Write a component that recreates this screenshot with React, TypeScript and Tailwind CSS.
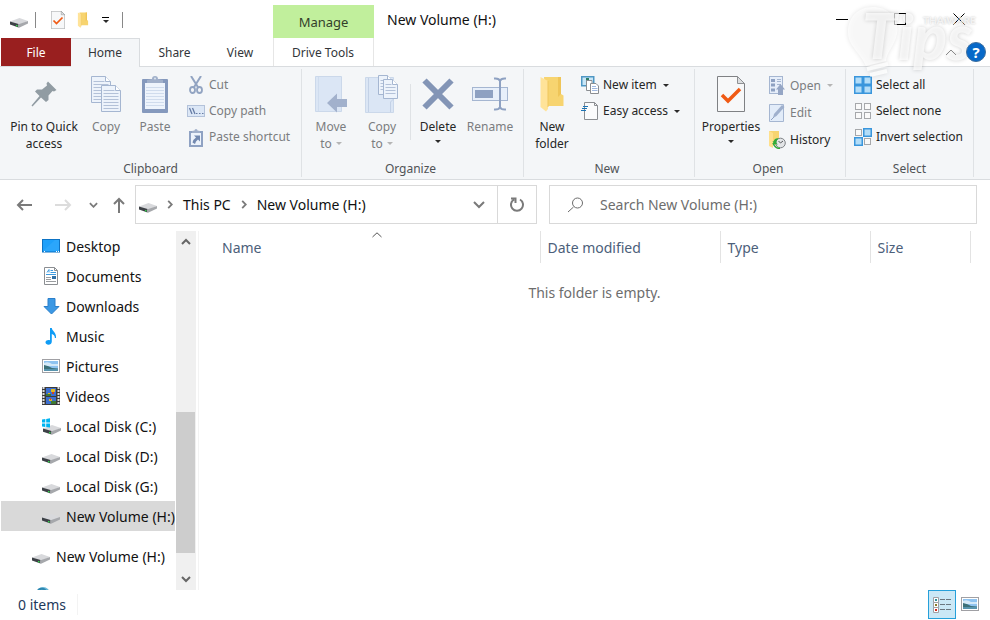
import type { ReactNode } from 'react';

type IconProps = { className?: string };

function DriveIcon({ className = 'w-[18px] h-[18px]' }: IconProps) {
  return (
    <svg viewBox="0 0 18 18" className={className} aria-hidden="true">
      <path d="M0 10.500 L9.500 7 L18 10 L8.500 14 Z" fill="#d8d9dc" />
      <path d="M0 10.500 L8.500 13 V16.500 L0 13.500 Z" fill="#3d4146" />
      <path d="M8.500 13.300 L18 10 V12.500 L8.500 17 Z" fill="#a6a8ac" />
      <rect x="6" y="14" width="1.500" height="1.500" fill="#35d04b" />
    </svg>
  );
}

function SystemDriveIcon() {
  return (
    <svg viewBox="0 0 20 18" className="h-[18px] w-5" aria-hidden="true">
      <path d="M2 11.500 L11 8 L20 11 L10.500 15 Z" fill="#d8d9dc" />
      <path d="M2 11.500 L10.500 14 V17.500 L2 14.800 Z" fill="#3d4146" />
      <path d="M10.500 14.300 L20 11 V13.500 L10.500 18 Z" fill="#a6a8ac" />
      <rect x="8" y="15" width="1.500" height="1.500" fill="#35d04b" />
      <path d="M1 2.500 L4.300 2 V5.500 H1Z M5.200 1.900 L9 1.300 V5.500 H5.200Z M1 6.400 H4.300 V9.900 L1 9.400Z M5.200 6.400 H9 V10.600 L5.200 10Z" fill="#00b4f1" />
    </svg>
  );
}

function CheckDocIcon({ className }: IconProps) {
  return (
    <svg viewBox="0 0 28 36" className={className} aria-hidden="true">
      <path d="M.5.500 H20.500 L27.500 7.500 V35.500 H.5Z" fill="#f7f8f9" stroke="#7f8184" />
      <path d="M20.500.500 V7.500 H27.500Z" fill="#dcdee0" stroke="#8e9093" />
      <path d="M5 19 L11 25 L23 13" fill="none" stroke="#f05a14" strokeWidth="3.500" />
    </svg>
  );
}

function FolderIcon({ className }: IconProps) {
  return (
    <svg viewBox="0 0 24 36" className={className} aria-hidden="true">
      <path d="M4 1 H21 V18 L23.500 19.500 V30 H6Z" fill="#f7d470" />
      <path d="M18 1 H21 V18 L18 21Z" fill="#efc558" />
      <path d="M.5 1 L8 5 V33 L6 35.500 L.5 31Z" fill="#ffe399" />
      <path d="M8 5 V31" stroke="#f0c65c" />
    </svg>
  );
}

function PinIcon() {
  return (
    <svg viewBox="0 0 26 26" className="h-[26px] w-[26px]" aria-hidden="true">
      <path d="M17 .5 L25.500 9 L23 10.500 L21.500 10 L17.500 14.500 L17.500 19 L15 21 L10 16.500 L1.500 25.500 L.5 24.500 L8.500 15 L4 10.500 L6 8.500 L11 8.500 L16 4.500 L15.500 2.500Z" fill="#919ca3" />
    </svg>
  );
}

function Page({ x, y, w, h }: { x: number; y: number; w: number; h: number }) {
  const lines = [];
  for (let i = y + 5; i < y + h - 2; i += 3) lines.push(i);
  return (
    <g>
      <path d={`M${x} ${y} H${x + w - 5} L${x + w} ${y + 5} V${y + h} H${x}Z`} fill="#edf3fb" stroke="#a5b6d1" />
      <path d={`M${x + w - 5} ${y} V${y + 5} H${x + w}`} fill="#fff" stroke="#a5b6d1" />
      {lines.map((l, i) => (
        <path key={l} d={`M${x + 2} ${l} H${x + w - (i === 0 ? 6 : 2)}`} stroke="#b3c1d8" />
      ))}
    </g>
  );
}

function CopyIcon() {
  return (
    <svg viewBox="0 0 30 36" className="h-9 w-[30px]" aria-hidden="true">
      <Page x={0.5} y={0.5} w={19} h={26} />
      <Page x={10.5} y={9.5} w={19} h={26} />
    </svg>
  );
}

function PasteIcon() {
  return (
    <svg viewBox="0 0 26 38" className="h-[38px] w-[26px]" aria-hidden="true">
      <rect x="0" y="4" width="26" height="34" rx="1" fill="#8599bd" />
      <rect x="3" y="8" width="20" height="26" fill="#eef4fc" />
      <path d="M4 12.500H22M4 15.500H22M4 18.500H22M4 21.500H22M4 24.500H22M4 27.500H22M4 30.500H22" stroke="#d0dced" />
      <path d="M5 8 V5 L10 4 A3 3 0 0 1 16 4 L21 5 V8Z" fill="#a1b0ca" />
      <circle cx="13" cy="3.500" r="1" fill="#dce5f1" />
    </svg>
  );
}

function CutIcon() {
  return (
    <svg viewBox="0 0 14 18" className="h-[18px] w-[14px]" fill="none" stroke="#92a4c2" aria-hidden="true">
      <path d="M2 0 L9.500 12 M12 0 L4.500 12" strokeWidth="2" />
      <ellipse cx="3.500" cy="14" rx="2.500" ry="3" strokeWidth="1.800" />
      <ellipse cx="10.500" cy="14" rx="2.500" ry="3" strokeWidth="1.800" />
    </svg>
  );
}

function CopyPathIcon() {
  return (
    <svg viewBox="0 0 18 12" className="h-3 w-[18px]" aria-hidden="true">
      <rect x=".5" y=".5" width="17" height="11" fill="#dce7f6" stroke="#b3c2da" />
      <path d="M2.500 3 L5 9 M5.500 3 L8 9" stroke="#667ca5" strokeWidth="1.300" />
      <path d="M9 8.500h1.500M12 8.500h1.500M15 8.500h1.500" stroke="#667ca5" />
    </svg>
  );
}

function PasteShortcutIcon() {
  return (
    <svg viewBox="0 0 14 19" className="h-[19px] w-[14px]" aria-hidden="true">
      <rect x="0" y="3" width="14" height="16" fill="#8fa2c3" />
      <rect x="2" y="5" width="10" height="12" fill="#edf3fb" />
      <path d="M3 5 V3 L5.500 2.500 A1.500 1.500 0 0 1 8.500 2.500 L11 3 V5Z" fill="#a1b0ca" />
      <path d="M5 7.500H11V13.500L9 11.500Q6.500 13 6 16L3.500 14.500Q4 11.500 7 9.500Z" fill="#7389b0" />
    </svg>
  );
}

function MoveToIcon() {
  return (
    <svg viewBox="0 0 32 38" className="h-[38px] w-8" aria-hidden="true">
      <path d="M.5 1.500 H26.500 V36.500 H.5Z" fill="#dbe6f5" stroke="#cbd8ea" />
      <path d="M3.500 2 V36" stroke="#cfdcee" />
      <path d="M12 28 L22 18.500 V24 H32 V32 H22 V37.500Z" fill="#a2b1cc" />
    </svg>
  );
}

function CopyToIcon() {
  return (
    <svg viewBox="0 0 34 38" className="h-[38px] w-[34px]" aria-hidden="true">
      <path d="M.5 2.500 H28.500 V37.500 H.5Z" fill="#dbe6f5" stroke="#cbd8ea" />
      <path d="M3.500 3 V37 M25.500 37 V27 L28.500 24" stroke="#c3d1e6" fill="none" />
      <Page x={13.5} y={0.5} w={14} h={19} />
      <Page x={18.5} y={4.5} w={14} h={19} />
    </svg>
  );
}

function DeleteIcon() {
  return (
    <svg viewBox="0 0 32 32" className="h-8 w-8" aria-hidden="true">
      <path d="M2.500 2.500 L29.500 29.500 M29.500 2.500 L2.500 29.500" stroke="#8395b6" strokeWidth="6" />
    </svg>
  );
}

function RenameIcon() {
  return (
    <svg viewBox="0 0 36 34" className="h-[34px] w-9" aria-hidden="true">
      <rect x=".5" y="10.500" width="35" height="13" fill="#e7effa" stroke="#a5b6d1" />
      <rect x="3" y="13" width="18" height="8" fill="#8ea1c2" />
      <path d="M28 3 V31 M22 1.500 Q27 1 28 4 Q29 1 34 1.500 M22 32.500 Q27 33 28 30 Q29 33 34 32.500" fill="none" stroke="#8ea1c2" strokeWidth="2" />
    </svg>
  );
}

function NewItemIcon() {
  return (
    <svg viewBox="0 0 18 18" className="h-[18px] w-[18px]" aria-hidden="true">
      <rect x=".75" y=".75" width="12" height="9" fill="#c9e6f7" stroke="#4f97c4" strokeWidth="1.500" />
      <rect x="5" y="2" width="3" height="3" fill="#2e7d64" />
      <path d="M5.500 4.500 H11 V14.500 H5.500Z" fill="#fff" stroke="#8b8e92" />
      <path d="M9.500 7.500 H15 L17.500 10 V17.500 H9.500Z" fill="#fff" stroke="#8b8e92" />
      <path d="M11 10.500H15M11 12.500H16.500M11 14.500H16.500" stroke="#9fb8e0" />
    </svg>
  );
}

function EasyAccessIcon() {
  return (
    <svg viewBox="0 0 18 18" className="h-[18px] w-[18px]" aria-hidden="true">
      <path d="M3.500.500 H13.500 L16.500 3.500 V17.500 H3.500Z" fill="#fafbfc" stroke="#8b8e92" />
      <path d="M13.500.500 V3.500 H16.500" fill="none" stroke="#8b8e92" />
      <path d="M2 4.500 H7 M1 6.500 H6 M0 8.500 H5" stroke="#1d74b4" strokeWidth="1.200" />
    </svg>
  );
}

function OpenIcon() {
  return (
    <svg viewBox="0 0 16 19" className="h-[19px] w-4" aria-hidden="true">
      <rect x=".5" y=".5" width="13" height="17" fill="#e6eefa" stroke="#a5b6d1" />
      <path d="M2 3h4v3H2zM2 7.500h4v3H2zM2 12.500h4v3H2z" fill="#8ea1c2" />
      <path d="M8 3.500h4M8 5.500h4M8 8.500h4" stroke="#a5b6d1" />
      <path d="M11.500 8 L16 13.500 H14 V19 H9 V13.500 H7Z" fill="#95a6c5" />
    </svg>
  );
}

function EditIcon() {
  return (
    <svg viewBox="0 0 16 18" className="h-[18px] w-4" aria-hidden="true">
      <path d="M.5.500 H14.500 V17.500 H.5Z" fill="#e2ecf9" stroke="#a5b6d1" />
      <path d="M4 14 L5 10 L13 1 L15.500 3 L7.500 12Z" fill="#9fb0cd" />
      <path d="M2 16 L5 13" stroke="#8ea1c2" />
    </svg>
  );
}

function HistoryIcon() {
  return (
    <svg viewBox="0 0 17 18" className="h-[18px] w-[17px]" aria-hidden="true">
      <path d="M0 0 H10 V8 L12 14 H3Z" fill="#f7d470" />
      <path d="M0 0 L4 2 V17 L0 15Z" fill="#ffe08c" />
      <circle cx="11.500" cy="12" r="4.800" fill="#e3e5e7" stroke="#7e8286" />
      <path d="M11.500 12 L9.500 10 M11.500 12 L14 10" stroke="#55585c" />
      <path d="M3.500 10 L5 13 L9 13.500 L7.500 12 Q7 9 10 7.500 Q6 6.500 4.500 10.500Z" fill="#2fab3a" />
      <path d="M4 12 Q6 17.500 11 17.500" fill="none" stroke="#2fab3a" strokeWidth="1.500" />
    </svg>
  );
}

function SelectIcon({ filled }: { filled: number[] }) {
  const cells = [[0, 0], [9, 0], [0, 9], [9, 9]];
  return (
    <svg viewBox="0 0 18 18" className="h-[18px] w-[18px]" aria-hidden="true">
      {cells.map(([x, y], i) =>
        filled.includes(i) ? (
          <rect key={i} x={x + 0.75} y={y + 0.75} width="7.500" height="7.500" fill="#b3ddf8" stroke="#3a96dc" strokeWidth="1.500" />
        ) : (
          <rect key={i} x={x + 1.5} y={y + 1.5} width="6" height="6" fill="#fafafa" stroke="#a6a8ab" />
        ),
      )}
    </svg>
  );
}

function DesktopIcon() {
  return (
    <svg viewBox="0 0 18 14" className="h-[14px] w-[18px]" aria-hidden="true">
      <rect x=".5" y=".5" width="17" height="12.500" fill="#1ea0fa" stroke="#0d73c4" />
      <path d="M1 12 L13 1 H17 V12Z" fill="#46b2fc" opacity=".35" />
      <path d="M2 12.500H3M14 12.500h1M16 12.500h1" stroke="#fff" />
    </svg>
  );
}

function DocumentsIcon() {
  return (
    <svg viewBox="0 0 14 18" className="h-[18px] w-[14px]" aria-hidden="true">
      <path d="M.5.500 H10.500 L13.500 3.500 V17.500 H.5Z" fill="#fff" stroke="#8b8e92" />
      <path d="M10.500.500 V3.500 H13.500" fill="none" stroke="#8b8e92" />
      <path d="M3 5.500 L5 2.500 V5.500 M6.500 3.500H9M6.500 5.500H12M2 7.500H12" stroke="#3d9be0" fill="none" />
      <path d="M2 10.500H7M2 12.500H7M2 14.500H12" stroke="#9a9da0" />
      <rect x="8" y="9" width="4" height="3" fill="#2f6fa5" />
    </svg>
  );
}

function DownloadsIcon() {
  return (
    <svg viewBox="0 0 17 17" className="h-[17px] w-[17px]" aria-hidden="true">
      <path d="M5 .5 H12 V8.500 H16 L8.500 16 L1 8.500 H5Z" fill="#3b98e4" stroke="#2b7fca" />
    </svg>
  );
}

function MusicIcon() {
  return (
    <svg viewBox="0 0 12 17" className="h-[17px] w-3" aria-hidden="true">
      <path d="M5 0 H6.800 C7 3 11.500 4 11 10 L9.800 10 C10 7.500 8.500 6.500 6.800 6 V13.500 C6.800 18 0 17.500 .5 14 C.8 12 3.500 11.500 5 12.300Z" fill="#0f9cf5" />
    </svg>
  );
}

function PictureIcon() {
  return (
    <svg viewBox="0 0 18 14" className="h-[14px] w-[18px]" aria-hidden="true">
      <rect x=".5" y=".5" width="17" height="13" fill="#fff" stroke="#a0a0a4" />
      <rect x="2" y="2" width="14" height="10" fill="#8fc3f0" />
      <path d="M2 4 Q6 2 10 5 H16 V7 H2Z" fill="#d4e9f8" />
      <path d="M2 6 Q7 7 10 9 L16 9.500 V12 H2Z" fill="#3c7078" />
      <path d="M2 10 L16 10 V12 H2Z" fill="#5794ae" />
    </svg>
  );
}

function VideosIcon() {
  return (
    <svg viewBox="0 0 18 18" className="h-[18px] w-[18px]" aria-hidden="true">
      <rect width="18" height="18" fill="#3a3a3a" />
      <path d="M1.500 0V18M16.500 0V18" stroke="#ddd" strokeWidth="2" strokeDasharray="2 1" />
      <rect x="4" y="1" width="10" height="8" fill="#3c6fd0" />
      <rect x="4" y="10" width="10" height="7" fill="#3c6fd0" />
      <path d="M9 2h4v3H9zM6 6h2v2H6zM7 12h3v2H7z" fill="#e0b91f" />
      <path d="M4 7h5v2H4zM9 14h5v3H9z" fill="#3f7a33" />
      <path d="M10 5h2v2h-2zM8 11h1v2H8z" fill="#d3411e" />
    </svg>
  );
}

function NetworkIcon() {
  return (
    <svg viewBox="0 0 18 18" className="h-[18px] w-[18px]" aria-hidden="true">
      <circle cx="11" cy="7" r="7" fill="#69b7d8" />
      <path d="M6 3 Q11 0 14 4" fill="none" stroke="#2e87b0" strokeWidth="2" />
    </svg>
  );
}

function Caret({ className = 'text-[#2a2a2a]' }: IconProps) {
  return (
    <svg viewBox="0 0 6 3" className={`h-[3px] w-[6px] shrink-0 ${className}`} aria-hidden="true">
      <path d="M0 0H6L3 3Z" fill="currentColor" />
    </svg>
  );
}

function Chevron({ d, className, box = '0 0 10 10', width = 2 }: { d: string; className: string; box?: string; width?: number }) {
  return (
    <svg viewBox={box} className={className} fill="none" stroke="currentColor" strokeWidth={width} aria-hidden="true">
      <path d={d} />
    </svg>
  );
}

type BigProps = { icon: ReactNode; lines: string[]; caret?: 'line' | 'below'; disabled?: boolean; className: string };

function BigButton({ icon, lines, caret, disabled, className }: BigProps) {
  return (
    <button disabled={disabled} className={`flex h-full shrink-0 flex-col items-center whitespace-nowrap pt-[2px] leading-[17px] ${disabled ? 'text-[#7b7d80]' : 'text-[#262626]'} ${className}`}>
      <span className="mb-1 flex h-10 items-center justify-center">{icon}</span>
      {lines.map((line, i) => (
        <span key={line} className="flex items-center gap-1">
          {line}
          {caret === 'line' && i === lines.length - 1 && <Caret className="text-[#b5b5b5]" />}
        </span>
      ))}
      {caret === 'below' && <span className="flex h-3 items-center"><Caret /></span>}
    </button>
  );
}

type SmallProps = { icon: ReactNode; label: string; caret?: boolean; disabled?: boolean; tall?: boolean };

function SmallButton({ icon, label, caret, disabled, tall }: SmallProps) {
  return (
    <button disabled={disabled} className={`flex items-center gap-[3px] whitespace-nowrap ${tall ? 'h-[27px]' : 'h-[26px]'} ${disabled ? 'text-[#7b7d80]' : 'text-[#262626]'}`}>
      <span className="flex w-5 shrink-0 items-center justify-center">{icon}</span>
      {label}
      {caret && <Caret className={disabled ? 'ml-[3px] text-[#b5b5b5]' : 'ml-[3px] text-[#2a2a2a]'} />}
    </button>
  );
}

function Group({ label, className, children }: { label: string; className: string; children: ReactNode }) {
  return (
    <section aria-label={label} className={`my-[2px] flex shrink-0 flex-col border-r border-[#dfe2e5] ${className}`}>
      <div className="flex flex-1 pt-[3px]">{children}</div>
      <h2 className="h-4 text-center leading-4 text-[#505356]">{label}</h2>
    </section>
  );
}

const places = [
  { label: 'Desktop', icon: <DesktopIcon /> },
  { label: 'Documents', icon: <DocumentsIcon /> },
  { label: 'Downloads', icon: <DownloadsIcon /> },
  { label: 'Music', icon: <MusicIcon /> },
  { label: 'Pictures', icon: <PictureIcon /> },
  { label: 'Videos', icon: <VideosIcon /> },
  { label: 'Local Disk (C:)', icon: <SystemDriveIcon /> },
  { label: 'Local Disk (D:)', icon: <DriveIcon /> },
  { label: 'Local Disk (G:)', icon: <DriveIcon /> },
  { label: 'New Volume (H:)', icon: <DriveIcon />, selected: true },
];

function Watermark() {
  return (
    <div className="pointer-events-none absolute right-0 top-0 h-20 w-[146px] select-none font-['Lato',sans-serif] font-black text-white/70" aria-hidden="true">
      <svg viewBox="0 0 146 80" className="h-20 w-[146px] drop-shadow-[0_0_2px_rgba(0,0,0,0.15)]">
        <path d="M29 7 C13 7 4 18 4 32 C4 46 16 52 22 66 L42 61 C42 53 51 45 53 34 C56 18 44 7 29 7Z" fill="#fff" fillOpacity=".7" />
        <path d="M23 69 L44 64 M26 75 L43 71" stroke="#fff" strokeOpacity=".8" strokeWidth="4" />
      </svg>
      <span className="absolute left-[18px] top-3 text-[62px] italic leading-[46px] [text-shadow:0_0_4px_rgba(0,0,0,0.18)]">T</span>
      <span className="absolute left-[54px] top-[26px] text-[62px] italic leading-[20px] [text-shadow:0_0_4px_rgba(0,0,0,0.18)]">ips</span>
      <span className="absolute left-[79px] top-[14px] text-[10px] leading-3 [text-shadow:0_0_2px_rgba(0,0,0,0.25)]">THAiWARE</span>
    </div>
  );
}

export default function App() {
  return (
    <div className="relative flex h-screen min-w-[980px] flex-col overflow-hidden bg-white font-['Noto_Sans','Open_Sans',sans-serif] text-[14px] text-[#111]">
      <header className="flex h-[38px] shrink-0">
        <div className="flex w-[273px] items-center pl-[10px] pt-px">
          <DriveIcon />
          <span className="ml-[7px] h-4 border-l border-[#888]" />
          <button aria-label="Properties" className="ml-[15px]"><CheckDocIcon className="h-[18px] w-[14px]" /></button>
          <button aria-label="New folder" className="ml-3"><FolderIcon className="h-4 w-3" /></button>
          <button aria-label="Customize Quick Access Toolbar" className="ml-[13px] flex w-[7px] flex-col items-center gap-[2px] text-black">
            <span className="h-px w-full bg-black" />
            <Caret />
          </button>
          <span className="ml-[13px] h-4 border-l border-[#888]" />
        </div>
        <div className="mt-[5px] flex w-[101px] items-center justify-center bg-[#c1ef9c] pt-[2px] text-[13px] text-[#33402a]">Manage</div>
        <h1 className="flex flex-1 items-center pl-[13px] pt-px">New Volume (H:)</h1>
        <div className="flex items-center pr-px text-black">
          <button aria-label="Minimize" className="flex w-[58px] justify-center"><span className="w-3 border-t border-black" /></button>
          <button aria-label="Maximize" className="flex w-[58px] justify-center"><span className="h-3 w-3 border border-black" /></button>
          <button aria-label="Close" className="flex w-[60px] justify-center">
            <Chevron d="M.5.500L11.500 11.500M11.500.500L.5 11.500" box="0 0 12 12" width={1} className="h-3 w-3" />
          </button>
        </div>
      </header>

      <nav aria-label="Ribbon tabs" className="flex h-[29px] shrink-0 border-b border-[#d9dcdf] pl-px text-[12px] text-[#33363a]">
        <button className="h-7 w-[70px] bg-[#991f1f] pt-px text-white">File</button>
        <button className="h-[29px] w-[69px] border-r border-t border-[#d9dcdf] bg-[#f4f6f8]">Home</button>
        <button className="w-[69px] pt-px">Share</button>
        <button className="w-[62px] pt-px">View</button>
        <button className="ml-[2px] w-[101px] border-x border-[#e6e6e6] pr-px pt-px">Drive Tools</button>
        <div className="flex flex-1 items-center justify-end gap-[9px] pr-1">
          <button aria-label="Collapse ribbon" className="relative z-10 text-[#8a8a8a]">
            <Chevron d="M1 6L6 1L11 6" box="0 0 12 7" width={1} className="h-[7px] w-3" />
          </button>
          <button aria-label="Help" className="relative z-10 h-5 w-5 rounded-full border border-[#3f6f9e] bg-[#0768c8] text-[15px] font-bold leading-[17px] text-white">?</button>
        </div>
      </nav>

      <div className="flex h-[113px] shrink-0 border-b border-[#d9dcdf] bg-[#f4f6f8] text-[12px]">
        <Group label="Clipboard" className="w-[302px]">
          <BigButton icon={<PinIcon />} lines={['Pin to Quick', 'access']} className="w-[88px]" />
          <BigButton icon={<CopyIcon />} lines={['Copy']} disabled className="w-9" />
          <BigButton icon={<PasteIcon />} lines={['Paste']} disabled className="w-[62px]" />
          <div>
            <SmallButton icon={<CutIcon />} label="Cut" disabled />
            <SmallButton icon={<CopyPathIcon />} label="Copy path" disabled />
            <SmallButton icon={<PasteShortcutIcon />} label="Paste shortcut" disabled />
          </div>
        </Group>
        <Group label="Organize" className="w-[222px] pr-1">
          <BigButton icon={<MoveToIcon />} lines={['Move', 'to']} caret="line" disabled className="w-[58px]" />
          <BigButton icon={<CopyToIcon />} lines={['Copy', 'to']} caret="line" disabled className="w-11" />
          <span className="ml-[6px] mt-3 h-14 border-l border-[#dfe2e5]" />
          <BigButton icon={<DeleteIcon />} lines={['Delete']} caret="below" className="w-[54px]" />
          <BigButton icon={<RenameIcon />} lines={['Rename']} disabled className="w-[50px]" />
        </Group>
        <Group label="New" className="w-[171px] pr-1">
          <BigButton icon={<FolderIcon className="h-9 w-6" />} lines={['New', 'folder']} className="w-14" />
          <div>
            <SmallButton icon={<NewItemIcon />} label="New item" caret />
            <SmallButton icon={<EasyAccessIcon />} label="Easy access" caret />
          </div>
        </Group>
        <Group label="Open" className="w-[151px] pr-1">
          <BigButton icon={<CheckDocIcon className="h-9 w-7" />} lines={['Properties']} caret="below" className="w-[72px]" />
          <div>
            <SmallButton icon={<OpenIcon />} label="Open" caret disabled tall />
            <SmallButton icon={<EditIcon />} label="Edit" disabled tall />
            <SmallButton icon={<HistoryIcon />} label="History" tall />
          </div>
        </Group>
        <Group label="Select" className="w-[128px]">
          <div className="pl-[7px]">
            <SmallButton icon={<SelectIcon filled={[0, 1, 2, 3]} />} label="Select all" />
            <SmallButton icon={<SelectIcon filled={[]} />} label="Select none" />
            <SmallButton icon={<SelectIcon filled={[1, 2]} />} label="Invert selection" />
          </div>
        </Group>
      </div>

      <div className="flex h-[51px] shrink-0 pb-[7px] pl-4 pr-[13px] pt-[5px]">
        <div className="flex w-[119px] items-center text-[#7a7a7a]">
          <button aria-label="Back"><Chevron d="M16 6H2M7 1L2 6L7 11" box="0 0 17 12" className="h-3 w-[17px]" /></button>
          <button aria-label="Forward" disabled className="ml-[22px] text-[#dcdcdc]"><Chevron d="M0 6H15M10 1L15 6L10 11" box="0 0 17 12" className="h-3 w-[17px]" /></button>
          <button aria-label="Recent locations" className="ml-[17px]"><Chevron d="M1 1L5 5L9 1" box="0 0 10 6" className="h-[6px] w-[9px]" /></button>
          <button aria-label="Up" className="ml-[15px]"><Chevron d="M6 16V2M1 7L6 2L11 7" box="0 0 12 16" className="h-4 w-3" /></button>
        </div>
        <div className="flex flex-1 border border-[#d9d9d9]">
          <nav aria-label="Address" className="flex flex-1 items-center pl-[3px]">
            <DriveIcon />
            <Chevron d="M1 1L5 5L1 9" box="0 0 6 10" className="ml-[10px] h-[9px] w-[6px] text-[#7a7a7a]" />
            <a href="#this-pc" className="ml-[10px]">This PC</a>
            <Chevron d="M1 1L5 5L1 9" box="0 0 6 10" className="ml-[10px] h-[9px] w-[6px] text-[#7a7a7a]" />
            <a href="#volume" className="ml-[10px]">New Volume (H:)</a>
            <button aria-label="Previous locations" className="ml-auto mr-3 text-[#7a7a7a]"><Chevron d="M1 1L6 6L11 1" box="0 0 12 8" className="h-2 w-3" /></button>
          </nav>
          <button aria-label="Refresh" className="flex w-[39px] items-center justify-center border-l border-[#d9d9d9] text-[#7a7a7a]">
            <Chevron d="M10 2.500A6 6 0 1 1 4 2.500M1 1.500H5.500V6" box="0 0 15 15" className="h-[15px] w-[15px]" />
          </button>
        </div>
        <label className="ml-3 flex w-[428px] items-center border border-[#d9d9d9] pl-[17px]">
          <Chevron d="M6.500 10L1 15M15.500 6A5 5 0 1 1 5.500 6A5 5 0 1 1 15.500 6" box="0 0 16 16" width={1} className="h-4 w-4 shrink-0 text-[#6c6c6c]" />
          <input type="search" aria-label="Search New Volume (H:)" placeholder="Search New Volume (H:)" className="ml-[17px] min-w-0 flex-1 bg-transparent outline-none placeholder:text-[#6d6d6d]" />
        </label>
      </div>

      <div className="flex min-h-0 flex-1">
        <nav aria-label="Folders" className="w-[175px] shrink-0 overflow-hidden pl-px">
          {places.map((p) => (
            <button key={p.label} className={`flex h-[30px] w-full items-center gap-[5px] whitespace-nowrap pl-10 ${p.selected ? 'bg-[#d9d9d9]' : ''}`}>
              <span className="flex w-5 shrink-0 justify-center">{p.icon}</span>
              {p.label}
            </button>
          ))}
          <button className="mt-[10px] flex h-[30px] w-full items-center gap-[5px] whitespace-nowrap pl-[30px]">
            <span className="flex w-5 shrink-0 justify-center"><DriveIcon /></span>
            New Volume (H:)
          </button>
          <button aria-label="Network" className="mt-[10px] flex h-[30px] w-full items-center pl-[31px]"><NetworkIcon /></button>
        </nav>
        <div className="ml-px flex w-5 shrink-0 flex-col bg-[#f0f0f0] text-[#666]">
          <button aria-label="Scroll up" className="flex h-[21px] items-center justify-center"><Chevron d="M1 6L5 2L9 6" box="0 0 10 7" className="h-[7px] w-[10px]" /></button>
          <div className="flex flex-1 flex-col justify-end"><div className="mr-px h-[47%] bg-[#cdcdcd]" /></div>
          <button aria-label="Scroll down" className="mt-4 flex h-[21px] items-center justify-center"><Chevron d="M1 1L5 5L9 1" box="0 0 10 7" className="h-[7px] w-[10px]" /></button>
        </div>
        <main className="ml-[2px] min-w-0 flex-1 border-l border-[#f3f3f3]">
          <table className="w-full table-fixed border-collapse">
            <thead>
              <tr className="h-8 text-left text-[#4c607a]">
                <th scope="col" className="relative w-[341px] border-r border-[#e3e3e3] pl-[23px] font-normal">
                  Name
                  <Chevron d="M.5 5L5 .8L9.500 5" box="0 0 10 6" width={1} className="absolute left-[173px] top-px h-[6px] w-[10px] text-[#555]" />
                </th>
                <th scope="col" className="w-[180px] border-r border-[#e3e3e3] pl-[7px] font-normal">Date modified</th>
                <th scope="col" className="w-[150px] border-r border-[#e3e3e3] pl-[7px] font-normal">Type</th>
                <th scope="col" className="w-[100px] border-r border-[#e3e3e3] pl-[7px] font-normal">Size</th>
                <td />
              </tr>
            </thead>
            <tbody>
              <tr><td colSpan={5} className="h-[58px] text-center text-[#6d6d6d]">This folder is empty.</td></tr>
            </tbody>
          </table>
        </main>
      </div>

      <footer className="flex h-[30px] shrink-0 items-start pl-[18px] pr-[11px] text-[#1e395b]">
        <span className="mt-1 w-[60px] border-r border-[#f3f3f3]">0 items</span>
        <button aria-label="Details view" className="ml-auto flex h-[29px] w-7 items-center justify-center border border-[#26a0da] bg-[#cbe8f6]">
          <svg viewBox="0 0 18 16" className="h-4 w-[18px]" aria-hidden="true">
            <path d="M.5.500H5.500V5.500H.5ZM.5 5.500H5.500V10.500H.5ZM.5 10.500H5.500V15.500H.5Z" fill="#fff" stroke="#a0a0a4" />
            <path d="M2 2h2v2H2z" fill="#2f8f9a" />
            <path d="M2 7h2v2H2z" fill="#8a7a2a" />
            <path d="M2 12h2v2H2z" fill="#d22a1e" />
            <path d="M7 2.500h5M13 2.500h5M7 7.500h5M13 7.500h5M7 12.500h5M13 12.500h5" stroke="#6b7780" />
          </svg>
        </button>
        <button aria-label="Large icons view" className="ml-[5px] mt-[7px]"><PictureIcon /></button>
      </footer>
      <Watermark />
    </div>
  );
}
